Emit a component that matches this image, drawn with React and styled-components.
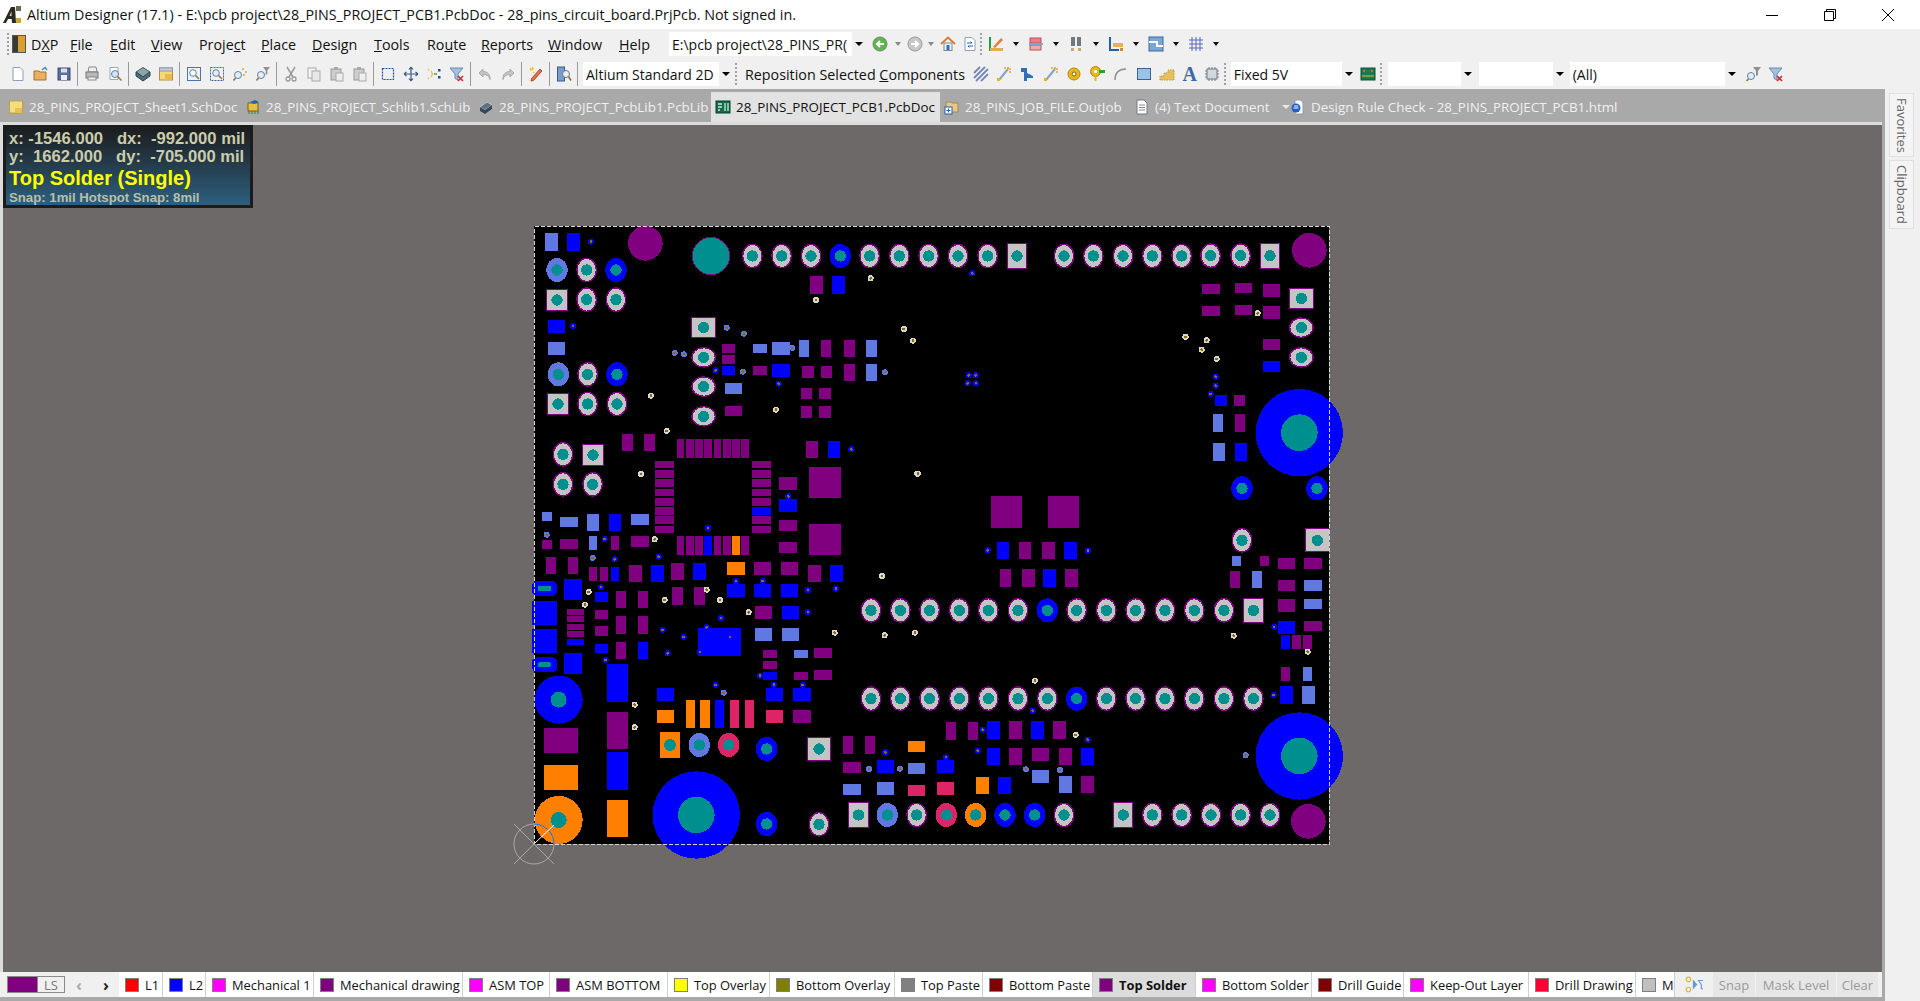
import React from "react";
import styled, { createGlobalStyle } from "styled-components";

const COLORS = {
  P: "#800080",
  B: "#0000ff",
  L: "#6078e2",
  O: "#ff8000",
  R: "#de2366",
  T: "#008f8f",
  G: "#c4c4c4",
};

const parse = (s) =>
  s
    .split(",")
    .map((t) => t.trim())
    .filter(Boolean)
    .map((t) => t.split(/\s+/).map(Number));

// board art, every list in the coordinates of a 3x crop of the board
const CROPS = [
  {
    at: [520, 215],
    rects: {
      P: "870 183 39 54, 606 387 39 27, 606 420 39 27, 615 573 51 30, 699 453 42 27, 903 375 30 51, 972 375 33 51, 846 453 36 36, 903 453 33 36, 972 447 33 51, 843 519 33 33, 897 519 36 33, 843 573 33 36, 897 573 36 36, 306 657 33 51, 372 657 33 51, 471 672 21 57, 498 672 24 57, 525 672 24 57, 552 672 24 57, 582 672 21 57, 609 672 24 57, 636 672 24 57, 663 672 24 57, 405 738 57 22, 405 765 57 25, 405 792 57 24, 405 822 57 21, 405 850 57 23, 696 738 57 22, 696 765 57 25, 696 792 57 24, 696 822 57 21, 696 850 57 23, 777 786 54 39, 867 756 96 93, 858 678 36 51",
      B: "141 54 39 54, 936 183 39 54, 84 315 51 38, 606 453 39 27, 756 447 54 39, 777 852 54 39, 924 678 36 51",
      L: "75 54 39 54, 84 381 51 39, 615 504 51 33, 699 387 42 27, 756 381 54 39, 837 375 30 51, 1038 375 33 51, 1038 447 33 51",
    },
    discs: "P 376 85 52",
    rings: "697 123, 785 123, 873 123, 1049 123, 1138 123, 200 165, 200 254, 288 254, 203 478, 203 567, 291 567, 129 718, 129 808, 218 808",
    colored: "B 961 123, L 111 165, B 288 165, L 115 478, B 291 478",
    wide: "551 427, 551 515, 551 604",
    squares: "79 223 143 287, 82 535 146 599, 187 688 251 752, 514 307 588 368",
    vias: "B 213 80, B 159 333, G 1052 190, G 888 255, G 393 542, G 440 648, G 363 777, L 620 338, L 672 356, L 464 414, L 492 418, B 587 466, L 669 470, L 817 399, B 776 506, G 768 584, L 1095 472, G 1152 342, G 1179 377, B 805 844, B 994 703, G 1192 776",
    extra: "teal",
  },
  {
    at: [500, 500],
    rects: {
      P: "465 0 57 18, 465 21 57 24, 465 48 57 24, 465 78 57 21, 756 0 57 18, 756 48 57 24, 756 78 57 21, 837 60 54 33, 837 126 54 33, 927 72 96 93, 126 120 30 27, 180 117 54 30, 333 108 24 42, 393 108 54 33, 531 108 21 57, 558 108 24 57, 585 108 24 57, 642 108 21 57, 669 108 24 57, 723 108 24 57, 138 171 30 51, 204 171 30 51, 267 201 24 42, 300 201 24 42, 387 195 39 51, 513 189 39 51, 762 186 51 39, 843 186 51 39, 924 195 39 51, 348 273 30 51, 414 273 30 51, 516 261 33 54, 582 261 33 54, 201 327 51 18, 201 348 51 18, 201 372 51 18, 201 393 51 18, 285 330 39 27, 285 378 39 30, 348 348 30 54, 414 348 30 54, 348 426 30 51, 765 318 51 39, 789 450 42 24, 942 444 54 30, 789 483 42 24, 882 516 42 24, 942 510 54 30, 321 636 63 111, 879 630 54 39, 132 684 102 75, 1029 708 30 54, 1095 708 30 54, 1029 786 54 33",
      B: "756 21 57 24, 837 0 54 36, 327 42 36 51, 612 108 24 57, 333 201 24 42, 453 195 39 51, 579 189 39 51, 990 195 39 51, 192 237 54 63, 285 276 39 30, 681 252 54 39, 762 252 51 39, 843 252 51 39, 96 304 75 72, 96 388 75 72, 201 417 51 18, 285 432 39 27, 414 426 30 51, 846 318 51 39, 594 384 129 84, 192 459 54 63, 321 492 63 114, 321 756 63 114, 789 516 42 24, 471 564 51 39, 645 600 27 84, 798 564 51 39, 879 564 54 39, 1131 780 51 39",
      L: "126 36 30 27, 180 51 54 30, 261 42 36 51, 393 42 54 33, 267 108 24 42, 765 384 51 39, 846 384 51 39, 882 450 42 24, 1029 852 54 33, 1131 846 51 39",
      O: "696 108 24 57, 681 186 54 39, 321 900 63 111, 471 630 51 39, 558 600 27 84, 600 600 30 84, 132 795 102 75, 480 696 60 78",
      R: "690 600 27 84, 735 600 27 84, 798 630 51 39",
    },
    pills: "96 243 75 45 113 258 40 15, 96 472 75 45 114 487 38 15",
    discs: "B 176 599 72, O 176 960 72, B 589 945 131, T 589 945 55, T 176 599 24, T 176 960 24, T 510 735 18",
    rings: "1113 331, 1113 596, 957 973",
    colored: "L 598 735, R 686 735, B 800 747, B 800 972, L 1162 945",
    squares: "921 712 993 782, 1044 907 1107 983",
    vias: "B 624 84, L 140 104, B 314 117, G 464 118, L 278 174, B 344 178, B 476 170, G 1146 228, G 266 276, B 303 262, G 255 314, G 620 269, G 494 300, G 660 300, B 708 243, B 788 243, B 924 270, B 1008 266, G 746 337, B 924 337, B 663 354, B 488 390, B 551 411, B 503 460, B 620 382, B 600 457, B 690 411, G 1004 398, G 1154 406, B 317 480, B 780 527, B 647 555, L 671 578, B 822 554, B 908 555, G 404 614, G 404 682, B 1157 757, L 1107 807",
  },
  {
    at: [880, 560],
    rects: {
      P: "360 27 33 54, 426 27 39 54, 555 27 39 54, 198 486 30 54, 264 486 30 54, 387 483 39 54, 519 483 39 54, 387 564 39 51, 456 564 51 39, 537 564 39 51, 603 648 39 51",
      B: "489 27 39 54, 321 483 39 54, 453 483 39 54, 321 564 39 51, 603 564 39 51, 171 600 51 39, 354 651 39 51",
      L: "84 609 51 33, 456 630 51 39, 537 648 39 51",
      O: "84 543 51 33, 288 651 39 51",
      R: "84 675 51 33, 171 666 51 39",
    },
    rings: "61 151, 149 151, 238 151, 325 151, 414 151, 590 151, 679 151, 767 151, 855 151, 943 151, 1032 151, 61 416, 149 416, 238 416, 325 416, 414 416, 502 416, 679 416, 767 416, 855 416, 943 416, 1032 416, 1120 416, 110 765, 552 765, 817 765, 905 765, 993 765, 1082 765, 1170 765",
    colored: "B 502 151, B 590 416, R 199 765, O 287 765, B 375 765, B 464 765",
    squares: "1090 115 1151 188, 700 727 759 803",
    vias: "G 6 48, G 14 226, G 105 218, G 465 362, B 458 452, B 308 509, G 587 525, B 623 539, B 16 577, L 60 626, B 198 592, B 293 572, L 438 628, L 540 630, L 1097 586",
  },
  {
    at: [900, 215],
    rings: "86 123, 174 123, 263 123, 492 123, 580 123, 669 123, 757 123, 845 123",
    squares: "321 85 381 161",
    vias: "B 217 175, G 11 342, G 39 377, G 856 366, B 206 481, B 227 481, B 203 505, B 228 505",
  },
  {
    at: [880, 400],
    rects: {
      P: "333 288 93 96, 504 288 93 96, 417 426 36 51, 486 426 39 51",
      B: "351 426 36 51, 552 426 39 51",
    },
    vias: "G 114 221, B 323 451, B 624 452",
  },
  {
    at: [1180, 220],
    rects: {
      P: "66 192 54 30, 165 189 51 30, 249 192 51 39, 66 258 54 30, 165 255 51 30, 249 258 51 39, 249 357 51 33, 162 525 33 33, 165 582 30 54",
      B: "249 423 51 33, 105 525 36 33, 165 669 36 54",
      L: "99 582 30 54, 99 669 36 54",
    },
    discs: "P 388 91 52, B 358 638 131, T 358 638 55",
    rings: "92 107, 182 107",
    wide: "364 323, 364 412",
    colored: "B 186 805",
    squares: "240 69 300 146, 328 205 401 266",
    vias: "G 233 280, G 17 351, G 80 361, G 65 389, G 110 417, B 107 470, B 107 497, B 92 522",
  },
  {
    at: [1180, 520],
    rects: {
      P: "240 108 27 30, 294 114 51 33, 372 114 54 33, 150 153 30 51, 294 180 51 33, 294 237 51 39, 372 303 54 30, 336 345 27 42, 369 345 27 42, 303 441 27 42",
      B: "294 303 51 39, 303 345 27 42, 300 498 39 54",
      L: "156 108 27 30, 216 153 30 51, 372 180 54 33, 372 237 54 30, 369 441 27 42, 366 498 39 54",
    },
    discs: "B 358 708 131, T 358 708 55, P 385 904 52",
    rings: "186 61",
    vias: "B 283 321, G 383 395, G 161 347, B 281 525",
  },
  {
    at: [1180, 220],
    clip: true,
    colored: "B 411 805",
    squares: "376 925 460 997",
  },
];

const PcbCrop = ({ crop }) => {
  const { at, rects = {}, discs = "", rings = "", colored = "", wide = "", squares = "", vias = "", pills = "" } = crop;
  const art = (
    <g transform={`translate(${at[0]} ${at[1]}) scale(0.33333)`}>
      {Object.keys(rects).map((c) =>
        parse(rects[c]).map(([x, y, w, h], i) => (
          <rect key={c + i} x={x} y={y} width={w} height={h} fill={COLORS[c]} />
        ))
      )}
      {discs
        .split(",")
        .filter(Boolean)
        .map((d, i) => {
          const [c, x, y, r] = d.trim().split(/\s+/);
          return <circle key={i} cx={x} cy={y} r={r} fill={COLORS[c]} />;
        })}
      {parse(pills).map(([x, y, w, h, ix, iy, iw, ih], i) => (
        <g key={i}>
          <rect x={x} y={y} width={w} height={h} rx="16" fill={COLORS.B} />
          <rect x={ix} y={iy} width={iw} height={ih} rx="4" fill={COLORS.T} />
        </g>
      ))}
      {parse(rings).map(([x, y], i) => (
        <g key={i}>
          <ellipse cx={x} cy={y} rx="29" ry="35" fill={COLORS.G} stroke={COLORS.P} strokeWidth="4" />
          <circle cx={x} cy={y} r="17" fill={COLORS.T} />
        </g>
      ))}
      {parse(wide).map(([x, y], i) => (
        <g key={i}>
          <ellipse cx={x} cy={y} rx="35" ry="29" fill={COLORS.G} stroke={COLORS.P} strokeWidth="4" />
          <circle cx={x} cy={y} r="17" fill={COLORS.T} />
        </g>
      ))}
      {colored
        .split(",")
        .filter(Boolean)
        .map((d, i) => {
          const [c, x, y] = d.trim().split(/\s+/);
          return (
            <g key={i}>
              <ellipse cx={x} cy={y} rx="32" ry="36" fill={COLORS[c]} />
              <circle cx={x} cy={y} r="17" fill={COLORS.T} />
            </g>
          );
        })}
      {parse(squares).map(([x0, y0, x1, y1], i) => (
        <g key={i}>
          <rect x={x0 + 1.5} y={y0 + 1.5} width={x1 - x0 - 3} height={y1 - y0 - 3} fill={COLORS.G} stroke={COLORS.P} strokeWidth="3" />
          <circle cx={x1 - x0 > 80 ? x0 + 36 : (x0 + x1) / 2} cy={(y0 + y1) / 2} r="17" fill={COLORS.T} />
        </g>
      ))}
      {vias
        .split(",")
        .filter(Boolean)
        .map((d, i) => {
          const [c, x, y] = d.trim().split(/\s+/);
          return (
            <g key={i}>
              <circle cx={x} cy={y} r="9" fill={COLORS[c] === COLORS.G ? "#d8d8d0" : COLORS[c]} />
              <circle cx={x} cy={y} r="4" fill="#8c6a12" />
            </g>
          );
        })}
      {crop.extra === "teal" && <circle cx="573" cy="123" r="56" fill={COLORS.T} stroke={COLORS.P} strokeWidth="3" />}
    </g>
  );
  return crop.clip ? <g clipPath="url(#board)">{art}</g> : art;
};

const PcbDrawing = () => (
  <BoardSvg width="1879" height="847" viewBox="3 125 1879 847">
    <defs>
      <clipPath id="board">
        <rect x="534" y="226" width="795" height="618" />
      </clipPath>
    </defs>
    <rect x="534" y="226" width="795" height="618" fill="#000" />
    {CROPS.map((crop, i) => (
      <PcbCrop key={i} crop={crop} />
    ))}
    <rect x="534.5" y="226.5" width="795" height="618" fill="none" stroke="#d4d4d4" strokeDasharray="4 2" />
    <g fill="none" stroke="#a8a8a8" shapeRendering="geometricPrecision">
      <circle cx="534" cy="844" r="20" />
      <path d="M514 824L554 864M514 864L534 844" />
      <path d="M534 824A20 20 0 0 1 554 844" stroke="#1a6ee0" />
      <path d="M535 843L554 825" stroke="#fff" />
    </g>
  </BoardSvg>
);

// toolbar glyphs, 16x16
const GLYPHS = {
  newdoc: <path d="M3 1.5h7l3 3v10H3z" fill="#fff" stroke="#8aa0b8" />,
  open: (
    <>
      <path d="M1 5h5l1 1h6v8H1z" fill="#e8b060" stroke="#a87020" />
      <path d="M9 4l3-2.5 2 2.5" fill="none" stroke="#4a80c0" strokeWidth="1.3" />
    </>
  ),
  save: (
    <>
      <rect x="2" y="2" width="12" height="12" fill="#5a6e98" stroke="#3a4a70" />
      <rect x="5" y="2.5" width="6" height="4" fill="#d8e0ee" />
      <rect x="5" y="9" width="6" height="5" fill="#eef" />
    </>
  ),
  print: (
    <>
      <path d="M5 1h7l1 5H4z" fill="#eee" stroke="#888" />
      <rect x="2" y="6" width="12" height="6" fill="#b8b8b8" stroke="#777" />
      <rect x="4" y="11" width="8" height="3" fill="#eee" stroke="#888" />
    </>
  ),
  preview: (
    <>
      <path d="M3 1.5h8v12H3z" fill="#fff" stroke="#9aa8b8" />
      <circle cx="8" cy="8" r="3.5" fill="#d0e4f4" stroke="#6080a0" />
      <path d="M10.5 10.5l4 4" stroke="#a07030" strokeWidth="1.6" />
    </>
  ),
  cube: (
    <>
      <path d="M8 1.5L15 6 8 11 1 6z" fill="#8fa4a8" stroke="#3e5a60" />
      <path d="M1 6v4l7 5 7-5V6L8 11z" fill="#4f6f78" stroke="#2c4650" />
    </>
  ),
  sheet: (
    <>
      <rect x="1.5" y="2" width="13" height="12" fill="#f6d878" stroke="#b09040" />
      <rect x="1.5" y="2" width="13" height="3" fill="#c8d0d8" stroke="#8898a8" />
      <rect x="7" y="8" width="7" height="6" fill="#e8b848" />
    </>
  ),
  zoomfit: (
    <>
      <rect x="1.5" y="1.5" width="13" height="13" fill="#eaf2fa" stroke="#5070a8" />
      <circle cx="7" cy="7" r="3.3" fill="#fff" stroke="#6080a0" />
      <path d="M9.5 9.5l3.5 3.5" stroke="#a07030" strokeWidth="1.6" />
    </>
  ),
  zoomsel: (
    <>
      <rect x="1.5" y="1.5" width="13" height="13" fill="none" stroke="#4060a0" strokeDasharray="2 1" />
      <circle cx="7" cy="7" r="3.3" fill="#e4eef8" stroke="#6080a0" />
      <path d="M9.5 9.5l3.5 3.5" stroke="#a07030" strokeWidth="1.6" />
    </>
  ),
  zoomobj: (
    <>
      <circle cx="6" cy="9" r="3.5" fill="#e4eef8" stroke="#6080a0" />
      <path d="M3.5 12l-2 2.5" stroke="#a07030" strokeWidth="1.6" />
      <path d="M10 3h2M13 6h2M11 9h2" stroke="#d4b020" strokeWidth="1.6" />
    </>
  ),
  zoomfilter: (
    <>
      <circle cx="6" cy="9" r="3.5" fill="#e4eef8" stroke="#6080a0" />
      <path d="M3.5 12l-2 2.5" stroke="#a07030" strokeWidth="1.6" />
      <path d="M8 1h7l-2.7 3.5V8L10.7 9V4.5z" fill="#909090" />
    </>
  ),
  cut: (
    <>
      <path d="M4 1l6 10M12 1L6 11" stroke="#9a9a9a" strokeWidth="1.5" />
      <circle cx="5" cy="13" r="2" fill="none" stroke="#9a9a9a" strokeWidth="1.3" />
      <circle cx="11" cy="13" r="2" fill="none" stroke="#9a9a9a" strokeWidth="1.3" />
    </>
  ),
  copy: (
    <>
      <rect x="2" y="2" width="8" height="10" fill="#f4f4f4" stroke="#aaa" />
      <rect x="6" y="5" width="8" height="10" fill="#e8e8e8" stroke="#aaa" />
    </>
  ),
  paste: (
    <>
      <rect x="2" y="3" width="10" height="11" fill="#ccc" stroke="#999" />
      <rect x="5" y="1" width="4" height="3" fill="#aaa" />
      <rect x="7" y="7" width="7" height="8" fill="#eee" stroke="#aaa" />
    </>
  ),
  marquee: <rect x="2.5" y="2.5" width="11" height="11" fill="none" stroke="#2c4a9c" strokeDasharray="2 1" strokeWidth="1.2" />,
  move: <path d="M8 1v14M1 8h14M8 1L6 3.5M8 1l2 2.5M8 15l-2-2.5M8 15l2-2.5M1 8l2.5-2M1 8l2.5 2M15 8l-2.5-2M15 8l-2.5 2" fill="none" stroke="#3a5a8c" strokeWidth="1.2" />,
  deselect: (
    <>
      <path d="M2 3l1 1.5M2 13l1-1.5M5 5l1.5 3L5 11" fill="none" stroke="#d8c040" strokeWidth="1.2" />
      <path d="M8 8h3" stroke="#444" />
      <rect x="12" y="3" width="2.5" height="2.5" fill="#2c4a7c" />
      <rect x="12" y="10" width="2.5" height="2.5" fill="#2c4a7c" />
    </>
  ),
  clearfilter: (
    <>
      <path d="M1 2h13L9 8v6l-3-1.5V8z" fill="#a4c0e0" stroke="#6a8ab0" />
      <path d="M9 10l5 5M14 10l-5 5" stroke="#d03030" strokeWidth="1.7" />
    </>
  ),
  undo: <path d="M6 3L2 7l4 4V8.5c4 0 6 1.5 7 5 .5-5-2.500-8-7-8z" fill="#c4c4c4" stroke="#aaa" />,
  redo: <path d="M10 3l4 4-4 4V8.5c-4 0-6 1.500-7 5-.5-5 2.500-8 7-8z" fill="#c4c4c4" stroke="#aaa" />,
  pen: (
    <>
      <path d="M12 3l2 2-8.500 9.500L3 15l.5-2.500z" fill="#e07050" stroke="#b05030" />
      <path d="M2 2l1 2 2-1-1-2M5 6l1 1" stroke="#e8c820" strokeWidth="1.5" fill="none" />
    </>
  ),
  browse: (
    <>
      <rect x="1.5" y="1" width="7" height="14" fill="#7a9cc8" stroke="#3a5a8c" />
      <circle cx="10" cy="8" r="3.5" fill="#e8eef4" stroke="#607890" />
      <path d="M12.500 10.500l2.500 4" stroke="#a07030" strokeWidth="1.6" />
    </>
  ),
  hatch: <path d="M1 7l6-6M1 12L12 1M3 15L15 3M8 15l7-7" stroke="#7488b0" strokeWidth="1.8" />,
  route: (
    <>
      <path d="M3 14L12 3" stroke="#8aa0c4" strokeWidth="2" />
      <path d="M8 2h6v6" fill="none" stroke="#e0a020" strokeWidth="1.4" strokeDasharray="2 1" />
      <rect x="1" y="12" width="3" height="3" fill="#e8b030" />
    </>
  ),
  bus: <path d="M2 2h6v5l6 3v2H8v3H5V6H2z" fill="#2f70b8" />,
  pad: (
    <>
      <circle cx="8" cy="8" r="6" fill="#e8b818" stroke="#b08810" />
      <circle cx="8" cy="8" r="2" fill="#fff" stroke="#806010" />
    </>
  ),
  via: (
    <>
      <circle cx="6.500" cy="5.500" r="5" fill="#e8b818" stroke="#b08810" />
      <circle cx="6.500" cy="5.500" r="1.700" fill="#fff" />
      <rect x="5.500" y="9" width="2" height="6" fill="#e8b818" />
      <rect x="10" y="4" width="6" height="3" fill="#30a030" />
    </>
  ),
  arc: <path d="M3 14c0-7 4-11 11-11" fill="none" stroke="#909090" strokeWidth="1.5" />,
  fill: <rect x="1.500" y="2.500" width="13" height="11" fill="#98c4e8" stroke="#406090" />,
  region: <path d="M1 14V10h4V7h4V4h6v10z" fill="#e8c060" stroke="#c09830" strokeDasharray="1.500 1" />,
  chip: (
    <>
      <rect x="3" y="3" width="10" height="10" fill="#d0d8e0" stroke="#707880" />
      <path d="M1 5h2M1 8h2M1 11h2M13 5h2M13 8h2M13 11h2M5 1v2M8 1v2M11 1v2M5 13v2M8 13v2M11 13v2" stroke="#707880" />
    </>
  ),
  back: (
    <>
      <circle cx="8" cy="8" r="7" fill="#58b848" stroke="#808080" />
      <path d="M12 8H6M8 5L5 8l3 3" fill="none" stroke="#fff" strokeWidth="2" />
    </>
  ),
  forward: (
    <>
      <circle cx="8" cy="8" r="7" fill="#c8c8c8" stroke="#999" />
      <path d="M4 8h6M8 5l3 3-3 3" fill="none" stroke="#fff" strokeWidth="2" />
    </>
  ),
  home: (
    <>
      <path d="M1 8l7-6.500L15 8" fill="none" stroke="#d87830" strokeWidth="1.800" />
      <rect x="4" y="7" width="8" height="7.500" fill="#f0f0f0" stroke="#888" />
      <rect x="6.500" y="9" width="3" height="5" fill="#2870c8" />
    </>
  ),
  refresh: (
    <>
      <path d="M3 1.500h7l3 3v10H3z" fill="#fff" stroke="#8aa0b8" />
      <path d="M5 7h5l-1.500-1.500M11 10H6l1.500 1.500" fill="none" stroke="#2060b0" />
    </>
  ),
  measure: (
    <>
      <path d="M2 1v13h13" fill="none" stroke="#20a040" strokeWidth="2" />
      <path d="M5 11L13 2l2 2-8 8z" fill="#e08040" />
      <rect x="2" y="12" width="13" height="3" fill="#e0b050" />
    </>
  ),
  align: (
    <>
      <rect x="2" y="2" width="11" height="5" fill="#e88088" stroke="#c05058" />
      <rect x="2" y="9" width="11" height="5" fill="#f0a8a8" stroke="#c05058" />
      <rect x="1" y="7" width="14" height="2" fill="#78a8d8" />
    </>
  ),
  binoc: (
    <>
      <rect x="3" y="1" width="4" height="9" fill="#707880" />
      <rect x="9" y="1" width="4" height="9" fill="#707880" />
      <rect x="3" y="12" width="3" height="3" fill="#c8a868" />
      <rect x="10" y="12" width="3" height="3" fill="#c8a868" />
    </>
  ),
  dimension: (
    <>
      <path d="M2 1v13h9" fill="none" stroke="#2060a8" strokeWidth="2" />
      <rect x="5" y="7" width="10" height="4" fill="#e8b050" />
      <rect x="12" y="12" width="3" height="3" fill="#c89030" />
    </>
  ),
  grid2: (
    <>
      <rect x="1" y="1" width="14" height="14" fill="#78a8d8" stroke="#406898" />
      <path d="M1 6h8v4h6" fill="none" stroke="#fff" strokeWidth="2" />
    </>
  ),
  grid: <path d="M1 4h14M1 8h14M1 12h14M4 1v14M8 1v14M12 1v14" stroke="#5868b8" />,
  netcolor: (
    <>
      <rect x="1" y="2" width="14" height="12" fill="#1a7a50" stroke="#0a5030" />
      <path d="M3 4l2 2M5 4L3 6M11 4l2 2M13 4l-2 2" stroke="#e06030" />
      <path d="M2 10h12" stroke="#e0c040" />
    </>
  ),
  filterzoom: (
    <>
      <circle cx="6" cy="10" r="3.500" fill="#e4eef8" stroke="#6080a0" />
      <path d="M3.500 13l-2 2" stroke="#a07030" strokeWidth="1.600" />
      <path d="M8 1h8l-3 4v4l-2 1V5z" fill="#909090" />
    </>
  ),
  sch: (
    <>
      <rect x="1.500" y="2" width="13" height="12" fill="#f4dc80" stroke="#c0a040" />
      <rect x="7" y="9" width="7" height="5" fill="#e8c050" />
    </>
  ),
  schlib: (
    <>
      <rect x="3" y="4" width="10" height="8" fill="#e8c040" stroke="#806010" />
      <path d="M4 12v3M7 12v3M10 12v3M13 12v3" stroke="#2a8a2a" />
      <path d="M5 3l5-2 4 2-5 2z" fill="#2a60b0" />
    </>
  ),
  pcblib: (
    <>
      <path d="M2 8l7-5 5 3-7 5z" fill="#607080" stroke="#e0e0e0" strokeWidth=".6" />
      <path d="M2 8v4l5 3 7-5V6l-7 5z" fill="#384858" />
    </>
  ),
  pcb: (
    <>
      <rect x="1" y="2" width="14" height="12" fill="#0f6e4a" stroke="#06402c" />
      <path d="M3 5h4M3 8h4M3 11h2M10 4v8M13 4v8" stroke="#d0e8d8" strokeWidth="1.300" />
    </>
  ),
  outjob: (
    <>
      <path d="M2 3h5l1 1h6v9H2z" fill="#e4c888" stroke="#a08a50" />
      <rect x="1" y="8" width="7" height="7" fill="#fff" stroke="#2060b0" />
      <path d="M4.500 9.500v4M2.500 11.500h4" stroke="#2060b0" />
    </>
  ),
  textdoc: (
    <>
      <path d="M3 1h7l3 3v11H3z" fill="#fff" stroke="#778" />
      <path d="M5 6h6M5 8.500h6M5 11h6" stroke="#889" />
    </>
  ),
  html: (
    <>
      <path d="M5 1h6l2 3v11H5z" fill="#fff" stroke="#99a" />
      <circle cx="6" cy="9" r="4.500" fill="#2060c8" />
      <path d="M3.500 9h5M4 7h4" stroke="#fff" />
    </>
  ),
  layerfilter: (
    <>
      <circle cx="3" cy="3" r="2" fill="none" stroke="#d8c020" />
      <circle cx="3" cy="12" r="2" fill="none" stroke="#d8c020" />
      <path d="M7 3l4 4.500-4 4.500z" fill="#6898d8" />
      <path d="M12 4h7l-2.500 3.500V12l-2-1V7.500z" fill="none" stroke="#6898d8" />
    </>
  ),
};

const Glyph = ({ name, size = 16 }) => (
  <GlyphSvg width={size} height={size} viewBox="0 0 16 16">
    {GLYPHS[name]}
  </GlyphSvg>
);

const MENU = [
  { label: ["D", "X", "P"], w: 39 },
  { label: ["", "F", "ile"], w: 40 },
  { label: ["", "E", "dit"], w: 41 },
  { label: ["", "V", "iew"], w: 48 },
  { label: ["Proje", "c", "t"], w: 62 },
  { label: ["", "P", "lace"], w: 51 },
  { label: ["", "D", "esign"], w: 62 },
  { label: ["", "T", "ools"], w: 53 },
  { label: ["Ro", "u", "te"], w: 54 },
  { label: ["", "R", "eports"], w: 67 },
  { label: ["", "W", "indow"], w: 71 },
  { label: ["", "H", "elp"], w: 50 },
];

const TOOLS = [
  ["newdoc", "open", "save"],
  ["print", "preview"],
  ["cube", "sheet"],
  ["zoomfit", "zoomsel", "zoomobj", "zoomfilter"],
  ["cut", "copy", "paste", "paste"],
  ["marquee", "move", "deselect", "clearfilter"],
  ["undo", "redo"],
  ["pen"],
  ["browse"],
];

const PLACE_TOOLS = ["hatch", "route", "bus", "route", "pad", "via", "arc", "fill", "region"];

const TABS = [
  { icon: "sch", text: "28_PINS_PROJECT_Sheet1.SchDoc", w: 237, pad: 8 },
  { icon: "schlib", text: "28_PINS_PROJECT_Schlib1.SchLib", w: 233, pad: 8 },
  { icon: "pcblib", text: "28_PINS_PROJECT_PcbLib1.PcbLib", w: 241, pad: 8 },
  { icon: "pcb", text: "28_PINS_PROJECT_PCB1.PcbDoc", w: 229, pad: 4, active: true },
  { icon: "outjob", text: "28_PINS_JOB_FILE.OutJob", w: 186, pad: 4 },
  { icon: "textdoc", text: "(4) Text Document", w: 156, pad: 8, caret: true },
  { icon: "html", text: "Design Rule Check - 28_PINS_PROJECT_PCB1.html", w: 340, pad: 8 },
];

const LAYERS = [
  { name: "L1", color: "#ff0000", w: 44 },
  { name: "L2", color: "#0000ff", w: 43 },
  { name: "Mechanical 1", color: "#ff00ff", w: 108 },
  { name: "Mechanical drawing", color: "#800080", w: 149 },
  { name: "ASM TOP", color: "#ff00ff", w: 87 },
  { name: "ASM BOTTOM", color: "#800080", w: 118 },
  { name: "Top Overlay", color: "#ffff00", w: 102 },
  { name: "Bottom Overlay", color: "#808000", w: 125 },
  { name: "Top Paste", color: "#808080", w: 88 },
  { name: "Bottom Paste", color: "#800000", w: 110 },
  { name: "Top Solder", color: "#800080", w: 103, active: true },
  { name: "Bottom Solder", color: "#ff00ff", w: 116 },
  { name: "Drill Guide", color: "#800000", w: 92 },
  { name: "Keep-Out Layer", color: "#ff00ff", w: 125 },
  { name: "Drill Drawing", color: "#ff0030", w: 107 },
  { name: "M", color: "#c0c0c0", w: 39 },
];

const App = () => (
  <>
    <GlobalStyle />
    <Window>
      <TitleBar>
        <Logo width="20" height="20" viewBox="0 0 20 20">
          <path d="M1 18L9 2h4l1 16h-4l-.3-4H6l-2 4z" fill="#2a2a22" />
          <path d="M7.500 11h2L9.500 6z" fill="#e8d890" />
          <rect x="14" y="1" width="5" height="5" fill="#6a6a50" />
          <rect x="14" y="13" width="5" height="5" fill="#c8a840" />
        </Logo>
        <TitleText>
          Altium Designer (17.1) - E:\pcb project\28_PINS_PROJECT_PCB1.PcbDoc - 28_pins_circuit_board.PrjPcb. Not signed in.
        </TitleText>
        <WindowButtons>
          <WindowButton width="12" height="12" viewBox="0 0 12 12">
            <path d="M0 6.500h12" stroke="#000" />
          </WindowButton>
          <WindowButton width="12" height="12" viewBox="0 0 12 12">
            <path d="M.5 2.500h9v9h-9zM2.500 2.500v-2h9v9h-2" fill="none" stroke="#000" />
          </WindowButton>
          <WindowButton width="12" height="12" viewBox="0 0 12 12">
            <path d="M0 0l12 12M12 0L0 12" stroke="#000" />
          </WindowButton>
        </WindowButtons>
      </TitleBar>

      <MenuBar>
        <Grip />
        <DxpIcon />
        {MENU.map((m, i) => (
          <MenuItem key={i} $w={m.w}>
            {m.label[0]}
            <u>{m.label[1]}</u>
            {m.label[2]}
          </MenuItem>
        ))}
        <Combo $w={197} $ml={0}>
          <ComboText>E:\pcb project\28_PINS_PR(</ComboText>
          <Caret />
        </Combo>
        <ToolCell $w={24} $ml={1}>
          <Glyph name="back" />
        </ToolCell>
        <SmallCaret $w={12} />
        <ToolCell $w={22}>
          <Glyph name="forward" />
        </ToolCell>
        <SmallCaret $w={10} />
        <ToolCell $w={24}>
          <Glyph name="home" />
        </ToolCell>
        <ToolCell $w={19}>
          <Glyph name="refresh" />
        </ToolCell>
        <Grip />
        {["measure", "align", "binoc", "dimension", "grid2", "grid"].map((n) => (
          <React.Fragment key={n}>
            <ToolCell $w={22}>
              <Glyph name={n} />
            </ToolCell>
            <SmallCaret $w={18} $dark />
          </React.Fragment>
        ))}
      </MenuBar>

      <ToolBar>
        <ToolRun>
          {TOOLS.map((group, g) => (
            <React.Fragment key={g}>
              {group.map((n, i) => (
                <ToolCell key={i} $w={23}>
                  <Glyph name={n} />
                </ToolCell>
              ))}
              <Separator />
            </React.Fragment>
          ))}
        </ToolRun>
        <Combo $w={150} $ml={3}>
          <ComboText>Altium Standard 2D</ComboText>
          <Caret />
        </Combo>
        <Grip />
        <PlainLabel>
          Reposition Selected <u>C</u>omponents
        </PlainLabel>
        {PLACE_TOOLS.map((n, i) => (
          <ToolCell key={i} $w={23.3}>
            <Glyph name={n} />
          </ToolCell>
        ))}
        <ToolCell $w={22}>
          <LetterA>A</LetterA>
        </ToolCell>
        <ToolCell $w={22}>
          <Glyph name="chip" />
        </ToolCell>
        <Grip />
        <Combo $w={125} $ml={2}>
          <ComboText>Fixed 5V</ComboText>
          <Caret />
        </Combo>
        <ToolCell $w={22}>
          <Glyph name="netcolor" />
        </ToolCell>
        <Grip />
        <Combo $w={87} $ml={3}>
          <ComboText />
          <Caret />
        </Combo>
        <Combo $w={88} $ml={3}>
          <ComboText />
          <Caret />
        </Combo>
        <Combo $w={169} $ml={2}>
          <ComboText>(All)</ComboText>
          <Caret />
        </Combo>
        <ToolCell $w={24} $ml={1}>
          <Glyph name="filterzoom" />
        </ToolCell>
        <ToolCell $w={22}>
          <Glyph name="clearfilter" />
        </ToolCell>
      </ToolBar>

      <Body>
        <Main>
          <TabBar>
            {TABS.map((t) => (
              <Tab key={t.text} $w={t.w} $pad={t.pad} $active={t.active}>
                <Glyph name={t.icon} />
                <TabText $active={t.active}>{t.text}</TabText>
                {t.caret && <TabCaret />}
              </Tab>
            ))}
          </TabBar>
          <TabEdge />
          <Canvas>
            <PcbDrawing />
            <Hud>
              <HudRow>x: -1546.000   dx:  -992.000 mil</HudRow>
              <HudRow>y:  1662.000   dy:  -705.000 mil</HudRow>
              <HudLayer>Top Solder (Single)</HudLayer>
              <HudSnap>Snap: 1mil Hotspot Snap: 8mil</HudSnap>
            </Hud>
          </Canvas>
          <LayerBar>
            <CurrentLayer>
              <CurrentSwatch />
              <LsBox>LS</LsBox>
            </CurrentLayer>
            <LayerNav>
              <NavArrow $dim>‹</NavArrow>
              <NavArrow>›</NavArrow>
            </LayerNav>
            {LAYERS.map((l) => (
              <LayerTab key={l.name} $w={l.w} $active={l.active}>
                <LayerSwatch $color={l.color} />
                <LayerName $active={l.active}>{l.name}</LayerName>
              </LayerTab>
            ))}
            <LayerFilter>
              <Glyph name="layerfilter" size={18} />
            </LayerFilter>
            <GreyButton $w={42}>Snap</GreyButton>
            <GreyButton $w={80}>Mask Level</GreyButton>
            <GreyButton $w={41}>Clear</GreyButton>
          </LayerBar>
        </Main>
        <SidePanel>
          <SideTab $h={64}>Favorites</SideTab>
          <SideTab $h={69}>Clipboard</SideTab>
        </SidePanel>
      </Body>
    </Window>
  </>
);

const GlobalStyle = createGlobalStyle`
  html, body {
    margin: 0;
    padding: 0;
    overflow: hidden;
    background: #f0f0f0;
  }
  body {
    font-family: "Open Sans", "Noto Sans", sans-serif;
    font-size: 14px;
  }
`;

const GlyphSvg = styled.svg`
  flex: none;
  display: block;
`;

const Window = styled.div`
  width: 1920px;
  height: 1001px;
  display: flex;
  flex-direction: column;
  overflow: hidden;
`;

const TitleBar = styled.div`
  height: 29px;
  flex: none;
  background: #fff;
  display: flex;
  align-items: center;
  padding-left: 2px;
`;

const Logo = styled.svg`
  flex: none;
  margin-right: 5px;
`;

const TitleText = styled.div`
  font-size: 14.3px;
  color: #111;
  white-space: pre;
  flex: 1;
`;

const WindowButtons = styled.div`
  display: flex;
  align-items: center;
`;

const WindowButton = styled.svg`
  margin: 0 23px;
  &:last-child {
    margin-right: 26px;
  }
`;

const MenuBar = styled.div`
  height: 30px;
  flex: none;
  background: #f0f0f0;
  display: flex;
  align-items: center;
  padding-left: 6px;
`;

const Grip = styled.div`
  width: 2px;
  height: 22px;
  flex: none;
  margin: 0 3px 0 1px;
  background-image: repeating-linear-gradient(to bottom, #a0a0a0 0 2px, transparent 2px 4px);
`;

const DxpIcon = styled.div`
  width: 14px;
  height: 18px;
  flex: none;
  margin-right: 5px;
  background: linear-gradient(to right, #3a3a30 0 45%, #d8a030 45% 100%);
  border: 1px solid #555;
  box-sizing: border-box;
`;

const MenuItem = styled.div`
  width: ${(p) => p.$w}px;
  flex: none;
  font-size: 14.3px;
  color: #111;
  white-space: pre;
`;

const Combo = styled.div`
  width: ${(p) => p.$w}px;
  margin-left: ${(p) => p.$ml}px;
  height: 24px;
  flex: none;
  background: #fff;
  display: flex;
  align-items: center;
  border-right: 1px solid #f0f0f0;
`;

const ComboText = styled.div`
  flex: 1;
  padding-left: 3px;
  font-size: 14px;
  color: #111;
  white-space: pre;
  overflow: hidden;
`;

const Caret = styled.div`
  width: 14px;
  height: 100%;
  flex: none;
  background: #f0f0f0;
  display: flex;
  align-items: center;
  justify-content: center;
  &::after {
    content: "";
    border-left: 4px solid transparent;
    border-right: 4px solid transparent;
    border-top: 4px solid #000;
  }
`;

const SmallCaret = styled.div`
  width: ${(p) => p.$w}px;
  flex: none;
  display: flex;
  justify-content: center;
  &::after {
    content: "";
    border-left: 3.5px solid transparent;
    border-right: 3.5px solid transparent;
    border-top: 4px solid ${(p) => (p.$dark ? "#111" : "#888")};
  }
`;

const ToolBar = styled.div`
  height: 30px;
  flex: none;
  background: #f0f0f0;
  display: flex;
  align-items: center;
  padding-left: 6px;
`;

const ToolRun = styled.div`
  display: flex;
  align-items: center;
  flex: none;
`;

const ToolCell = styled.div`
  width: ${(p) => p.$w}px;
  margin-left: ${(p) => p.$ml || 0}px;
  flex: none;
  display: flex;
  align-items: center;
  justify-content: center;
`;

const Separator = styled.div`
  width: 1px;
  height: 24px;
  margin: 0 2px;
  background: #9a9a9a;
  flex: none;
`;

const PlainLabel = styled.div`
  font-size: 14.3px;
  color: #111;
  white-space: pre;
  flex: none;
  width: 229px;
  padding-left: 5px;
  box-sizing: border-box;
`;

const LetterA = styled.span`
  font-family: "Liberation Serif", serif;
  font-weight: bold;
  font-size: 20px;
  line-height: 20px;
  color: #3a68a8;
`;

const Body = styled.div`
  flex: 1;
  min-height: 0;
  display: flex;
`;

const Main = styled.div`
  width: 1885px;
  flex: none;
  background: #a9a9a9;
  display: flex;
  flex-direction: column;
`;

const TabBar = styled.div`
  height: 33px;
  flex: none;
  display: flex;
  align-items: flex-end;
`;

const Tab = styled.div`
  width: ${(p) => p.$w}px;
  height: 30px;
  flex: none;
  box-sizing: border-box;
  display: flex;
  align-items: center;
  gap: 5px;
  padding-left: ${(p) => p.$pad}px;
  background: ${(p) => (p.$active ? "#e2e2e2" : "transparent")};
`;

const TabText = styled.span`
  font-size: 13.4px;
  color: ${(p) => (p.$active ? "#111" : "#f0f0f0")};
  white-space: pre;
`;

const TabCaret = styled.div`
  margin-left: 7px;
  border-left: 4px solid transparent;
  border-right: 4px solid transparent;
  border-top: 4px solid #e8e8e8;
`;

const TabEdge = styled.div`
  height: 3px;
  flex: none;
  margin-right: 3px;
  background: #dcdcdc;
`;

const Canvas = styled.div`
  height: 847px;
  flex: none;
  position: relative;
  margin-right: 3px;
  border-left: 3px solid #dcdcdc;
  background: #6e6969;
  overflow: hidden;
`;

const BoardSvg = styled.svg`
  display: block;
  shape-rendering: crispEdges;
`;

const Hud = styled.div`
  position: absolute;
  left: 0;
  top: 0;
  width: 250px;
  height: 83px;
  box-sizing: border-box;
  padding: 5px 0 0 3px;
  background: linear-gradient(to bottom, #1b1b1b, #2e5f7e);
  border: 3px solid #1c1c1c;
  border-top: none;
  font-family: "Liberation Sans", Arial, sans-serif;
  font-weight: bold;
  white-space: pre;
`;

const HudRow = styled.div`
  font-size: 16.6px;
  line-height: 18px;
  color: #ccccaa;
`;

const HudLayer = styled.div`
  font-size: 20px;
  line-height: 24px;
  color: #ffff00;
`;

const HudSnap = styled.div`
  font-size: 13.2px;
  line-height: 15px;
  color: #b8c0a8;
`;

const LayerBar = styled.div`
  height: 25px;
  flex: none;
  display: flex;
  align-items: stretch;
  margin-bottom: 4px;
  background: #f0f0f0;
  margin-right: 3px;
`;

const CurrentLayer = styled.div`
  width: 72px;
  flex: none;
  display: flex;
  align-items: center;
  padding-left: 7px;
  box-sizing: border-box;
`;

const CurrentSwatch = styled.div`
  width: 31px;
  height: 17px;
  background: #800080;
  border: 1px solid #8a8a8a;
  box-sizing: border-box;
`;

const LsBox = styled.div`
  width: 27px;
  height: 17px;
  box-sizing: border-box;
  border: 1px solid #8a8a8a;
  border-left: none;
  font-size: 13px;
  line-height: 16px;
  text-align: center;
  color: #777;
`;

const LayerNav = styled.div`
  width: 47px;
  flex: none;
  display: flex;
  justify-content: space-between;
  padding: 0 10px 0 4px;
  box-sizing: border-box;
  align-items: center;
`;

const NavArrow = styled.span`
  font-size: 16px;
  font-weight: bold;
  line-height: 16px;
  color: ${(p) => (p.$dim ? "#aaa" : "#222")};
`;

const LayerTab = styled.div`
  width: ${(p) => p.$w}px;
  flex: none;
  box-sizing: border-box;
  overflow: hidden;
  display: flex;
  align-items: center;
  gap: 6px;
  padding-left: 6px;
  background: ${(p) => (p.$active ? "#dcdcdc" : "#fff")};
  border-right: 1px solid #d0d0d0;
`;

const LayerSwatch = styled.div`
  width: 14px;
  height: 14px;
  flex: none;
  box-sizing: border-box;
  background: ${(p) => p.$color};
  border: 1px solid #808080;
`;

const LayerName = styled.span`
  font-size: 12.9px;
  color: #111;
  white-space: pre;
  font-weight: ${(p) => (p.$active ? 700 : 400)};
`;

const LayerFilter = styled.div`
  width: 38px;
  flex: none;
  display: flex;
  align-items: center;
  justify-content: center;
`;

const GreyButton = styled.div`
  width: ${(p) => p.$w}px;
  flex: none;
  margin-right: 1px;
  background: #e6e6e6;
  color: #999;
  font-size: 13px;
  display: flex;
  align-items: center;
  justify-content: center;
  white-space: pre;
`;

const SidePanel = styled.div`
  flex: 1;
  background: #f0f0f0;
  display: flex;
  flex-direction: column;
  gap: 3px;
  padding: 4px 0 0 4px;
`;

const SideTab = styled.div`
  width: 25px;
  height: ${(p) => p.$h}px;
  box-sizing: border-box;
  background: #f4f4f4;
  border: 1px solid #e0e0e0;
  writing-mode: vertical-rl;
  font-size: 13px;
  line-height: 23px;
  padding-top: 4px;
  color: #666;
`;

export default App;
